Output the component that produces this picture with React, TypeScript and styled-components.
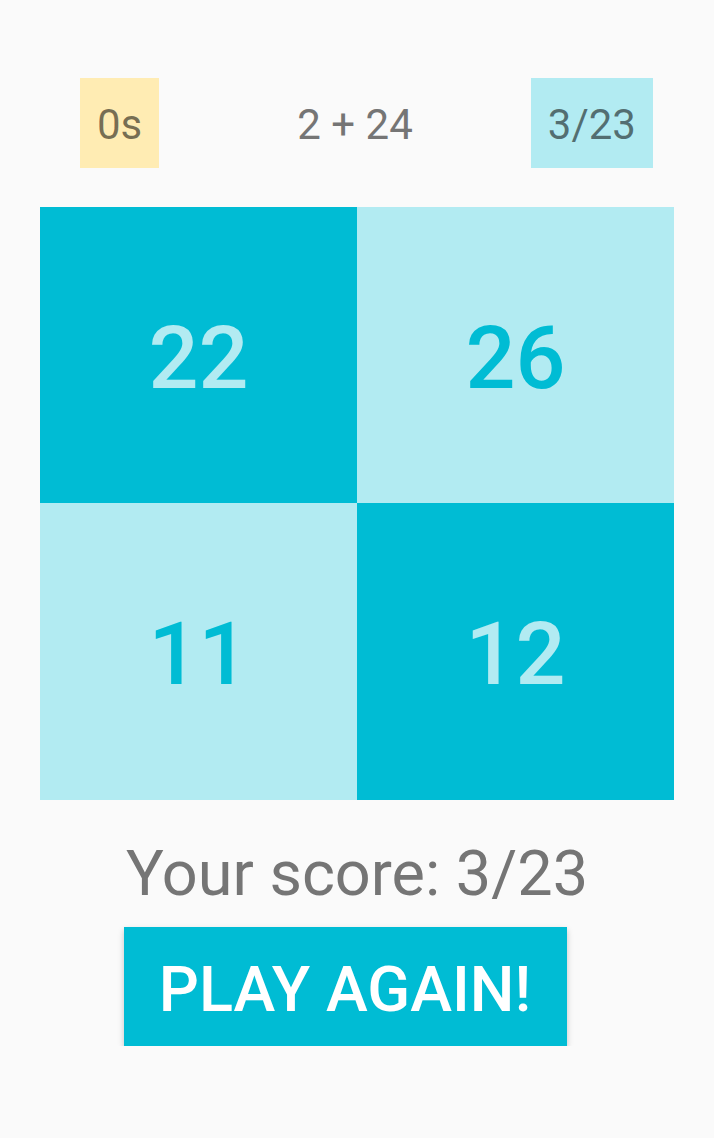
import React from "react";
import styled, { createGlobalStyle } from "styled-components";

const GlobalStyle = createGlobalStyle`
  html, body {
    margin: 0;
    padding: 0;
    background: #fafafa;
    font-family: Roboto, "Noto Sans", sans-serif;
  }
`;

const CYAN = "#00bcd4";
const LIGHT_CYAN = "#b2ebf2";

const Page = styled.div`
  display: flex;
  flex-direction: column;
  align-items: center;
  padding: 78px 40px 0;
`;

const TopBar = styled.div`
  align-self: stretch;
  display: flex;
  justify-content: space-between;
  align-items: center;
  padding: 0 21px 0 40px;
  height: 90px;
`;

const Badge = styled.div<{ $bg: string }>`
  display: flex;
  align-items: center;
  justify-content: center;
  height: 90px;
  padding: 2px 17px 0;
  box-sizing: border-box;
  background: ${(p) => p.$bg};
  color: rgba(0, 0, 0, 0.54);
  font-size: 42px;
`;

const Equation = styled.div`
  color: #757575;
  font-size: 42px;
  margin-left: 20px;
  padding-top: 2px;
`;

const Board = styled.div`
  align-self: stretch;
  display: grid;
  grid-template-columns: 317px 317px;
  grid-template-rows: 296px 297px;
  margin-top: 39px;
`;

const Cell = styled.div<{ $dark: boolean }>`
  display: flex;
  align-items: center;
  justify-content: center;
  padding-top: 4px;
  background: ${(p) => (p.$dark ? CYAN : LIGHT_CYAN)};
  color: ${(p) => (p.$dark ? LIGHT_CYAN : CYAN)};
  font-size: 88px;
  font-weight: 500;
`;

const Score = styled.div`
  margin-top: 37px;
  color: #757575;
  font-size: 63px;
  line-height: 74px;
`;

const PlayButton = styled.button`
  margin-top: 16px;
  margin-right: 24px;
  width: 443px;
  height: 119px;
  padding: 6px 0 0;
  border: 0;
  border-radius: 0;
  background: ${CYAN};
  color: #fff;
  font-family: Roboto, "Noto Sans", sans-serif;
  font-size: 63px;
  font-weight: 500;
  box-shadow: 0 3px 6px rgba(0, 0, 0, 0.22);
  cursor: pointer;
`;

const cells = [
  { value: 22, dark: true },
  { value: 26, dark: false },
  { value: 11, dark: false },
  { value: 12, dark: true },
];

export default function App() {
  return (
    <>
      <GlobalStyle />
      <Page>
        <TopBar>
          <Badge $bg="#ffecb3">0s</Badge>
          <Equation>2 + 24</Equation>
          <Badge $bg={LIGHT_CYAN}>3/23</Badge>
        </TopBar>
        <Board>
          {cells.map((c, i) => (
            <Cell key={i} $dark={c.dark}>
              {c.value}
            </Cell>
          ))}
        </Board>
        <Score>Your score: 3/23</Score>
        <PlayButton>PLAY AGAIN!</PlayButton>
      </Page>
    </>
  );
}
